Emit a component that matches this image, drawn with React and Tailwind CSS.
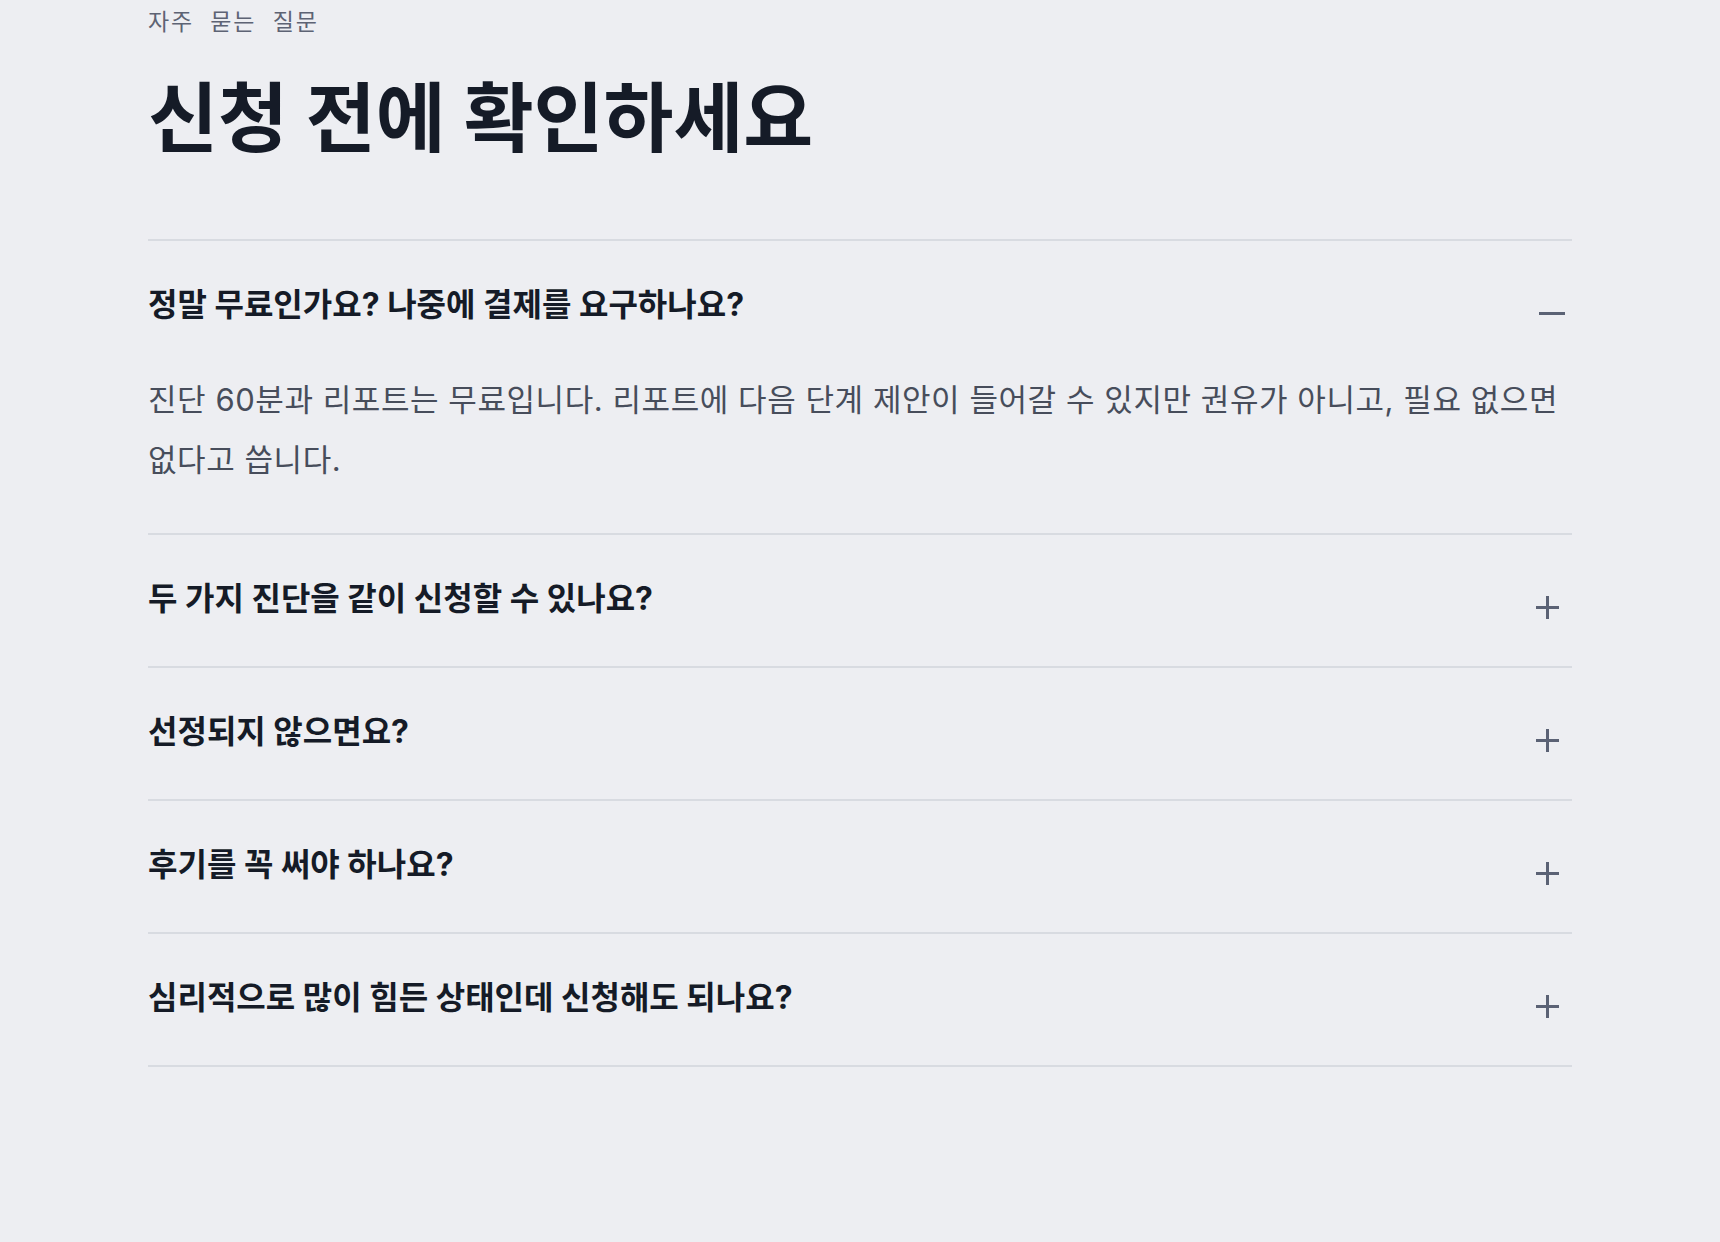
import React, { useState } from 'react';

const faqs = [
    {
        q: '정말 무료인가요? 나중에 결제를 요구하나요?',
        a: '진단 60분과 리포트는 무료입니다. 리포트에 다음 단계 제안이 들어갈 수 있지만 권유가 아니고, 필요 없으면 없다고 씁니다.',
    },
    { q: '두 가지 진단을 같이 신청할 수 있나요?', a: '' },
    { q: '선정되지 않으면요?', a: '' },
    { q: '후기를 꼭 써야 하나요?', a: '' },
    { q: '심리적으로 많이 힘든 상태인데 신청해도 되나요?', a: '' },
];

function MinusIcon() {
    return (
        <svg width="26" height="3" viewBox="0 0 26 3" className="mr-[7px]">
            <rect x="0" y="0" width="26" height="3" fill="#5b6275" />
        </svg>
    );
}

function PlusIcon() {
    return (
        <svg width="23" height="23" viewBox="0 0 23 23" className="mr-[13px]">
            <rect x="0" y="10" width="23" height="3" fill="#5b6275" />
            <rect x="10" y="0" width="3" height="23" fill="#5b6275" />
        </svg>
    );
}

function FaqItem({ item, open, onToggle }) {
    return (
        <div className="border-t-2 border-[#d8dbe1]">
            <button
                onClick={onToggle}
                className="w-full flex justify-between items-start pt-[42px] pb-[45px] text-left"
            >
                <span className="text-[32px] leading-[44px] font-bold text-[#151b27] break-keep">{item.q}</span>
                <span className="h-[28px] mt-[16px] flex items-center">
                    {open ? <MinusIcon /> : <PlusIcon />}
                </span>
            </button>
            {open && (
                <p className="-mt-[2px] pb-[43px] text-[31px] leading-[60px] tracking-[0.018em] text-[#474d5b] break-keep">
                    {item.a}
                </p>
            )}
        </div>
    );
}

export default function App() {
    const [openIndex, setOpenIndex] = useState(0);

    return (
        <div
            className="min-h-screen bg-[#edeef2]"
            style={{ fontFamily: 'Inter, "Noto Sans CJK KR", sans-serif' }}
        >
            <div className="max-w-[1424px] mx-auto pt-[6px] pb-[176px]">
                <p className="text-[23px] leading-[33px] text-[#5d6374] tracking-[0.08em] [word-spacing:0.35em]">
                    자주 묻는 질문
                </p>
                <h1 className="mt-[36px] text-[76px] leading-[86px] font-bold text-[#151b27]">
                    신청 전에 확인하세요
                </h1>
                <div className="mt-[78px] border-b-2 border-[#d8dbe1]">
                    {faqs.map((item, i) => (
                        <FaqItem
                            key={i}
                            item={item}
                            open={openIndex === i}
                            onToggle={() => setOpenIndex(openIndex === i ? -1 : i)}
                        />
                    ))}
                </div>
            </div>
        </div>
    );
}
